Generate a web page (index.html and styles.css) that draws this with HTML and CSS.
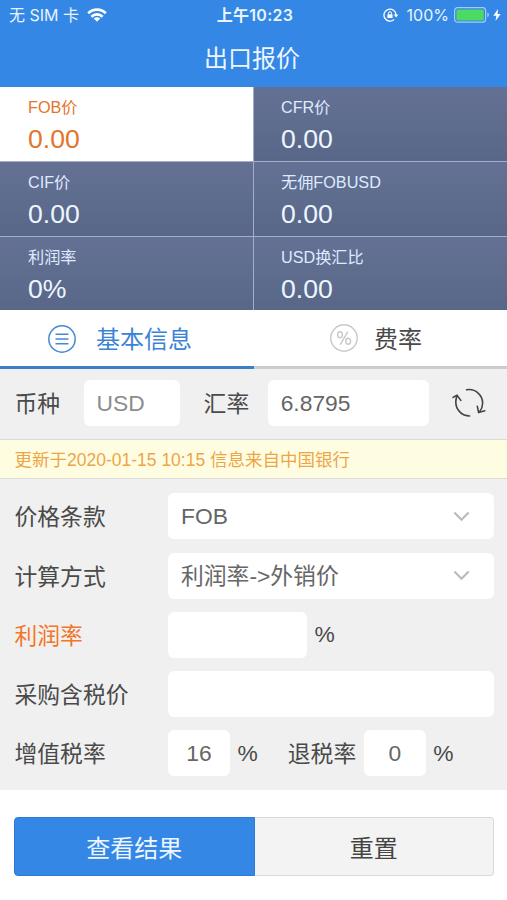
FILE: index.html
```
<!DOCTYPE html>
<html lang="zh-CN">
<head>
  <meta charset="UTF-8" />
  <meta name="viewport" content="width=device-width, initial-scale=1.0" />
  <title>出口报价</title>
  <link rel="stylesheet" href="styles.css">
</head>
<body>
  <!-- Status bar + title -->
  <header class="header">
    <div class="status-bar">
      <div class="status-left">
        <span>无 SIM 卡</span>
        <svg class="wifi" width="20" height="14" viewBox="0 0 20 14" fill="none" stroke="#fff" stroke-width="2.7">
          <path d="M1.2 5.2a12.4 12.4 0 0 1 17.6 0" />
          <path d="M4.4 8.7a7.9 7.9 0 0 1 11.2 0" />
          <path d="M10 13.8 6.7 10.6a4.7 4.7 0 0 1 6.6 0z" fill="#fff" stroke="none" />
        </svg>
      </div>
      <div class="status-time">上午10:23</div>
      <div class="status-right">
        <svg class="lock" width="16" height="14" viewBox="0 0 16 14" fill="none" stroke="#fff">
          <path d="M11.2 11.4A6 6 0 1 1 13 7" stroke-width="1.3" />
          <path d="M10.8 6.4h4.6L13.1 9.4z" fill="#fff" stroke="none" />
          <rect x="4.4" y="6.2" width="5.2" height="3.9" rx=".5" fill="#fff" stroke="none" />
          <path d="M5.5 6.4V5.2a1.5 1.5 0 0 1 3 0v1.2" />
        </svg>
        <span class="percent">100%</span>
        <svg class="battery" width="36" height="16" viewBox="0 0 36 16">
          <rect x=".6" y=".6" width="31" height="14.6" rx="3" fill="none" stroke="#a5cbf5" stroke-width="1.2" />
          <rect x="2.4" y="2.4" width="27.4" height="11" rx="1.4" fill="#4cd964" />
          <path d="M33.3 5.6c2.2.6 2.2 4 0 4.6z" fill="#a5cbf5" />
        </svg>
        <svg class="bolt" width="8" height="12" viewBox="0 0 8 12">
          <path d="M5 0 .3 6.8h3L2.5 12 7.7 4.9H4.6z" fill="#fff" />
        </svg>
      </div>
    </div>
    <h1 class="title">出口报价</h1>
  </header>

  <!-- Prices -->
  <section class="price-grid">
    <div class="price active"><span>FOB价</span><strong>0.00</strong></div>
    <div class="price"><span>CFR价</span><strong>0.00</strong></div>
    <div class="price"><span>CIF价</span><strong>0.00</strong></div>
    <div class="price"><span>无佣FOBUSD</span><strong>0.00</strong></div>
    <div class="price"><span>利润率</span><strong>0%</strong></div>
    <div class="price"><span>USD换汇比</span><strong>0.00</strong></div>
  </section>

  <!-- Tabs -->
  <nav class="tabs">
    <a class="tab active">
      <svg width="28" height="28" viewBox="0 0 28 28" fill="none" stroke="#4389d6" stroke-width="1.5">
        <circle cx="14" cy="14" r="13.2" />
        <path d="M7.5 9.2h13M7.5 14h13M7.5 18.8h13" />
      </svg>
      <span>基本信息</span>
    </a>
    <a class="tab">
      <svg width="28" height="28" viewBox="0 0 28 28" fill="none" stroke="#c8c8c8" stroke-width="1.4">
        <circle cx="14" cy="14" r="13.2" />
        <ellipse cx="10" cy="10.7" rx="2.4" ry="3" />
        <ellipse cx="18.2" cy="17.3" rx="2.4" ry="3" />
        <path d="M17.8 7.6 10.2 20.6" />
      </svg>
      <span>费率</span>
    </a>
  </nav>

  <!-- Currency and rate -->
  <div class="currency">
    <label>币种</label>
    <div class="field field-usd">USD</div>
    <label class="rate-label">汇率</label>
    <div class="field field-rate">6.8795</div>
    <svg class="refresh" width="34" height="30" viewBox="0 0 34 30" fill="none" stroke="#444" stroke-width="1.6" stroke-linecap="round" stroke-linejoin="round">
      <path d="M14.6 1.8C23.5.2 31 7.5 30.6 15.5a13 13 0 0 1-3 8.2" />
      <path d="M25.3 18.2 26.6 24.6 32.8 22.8" />
      <path d="M17.6 28C10 28 3.6 21.8 3.8 13.8a13 13 0 0 1 1-5.2" />
      <path d="M1 9.4 5 7.2 8.8 12.4" />
    </svg>
  </div>
  <p class="notice">更新于2020-01-15 10:15 信息来自中国银行</p>

  <!-- Form -->
  <main class="form">
    <div class="row">
      <label>价格条款</label>
      <div class="field select">FOB
        <svg width="17" height="11" viewBox="0 0 17 11" fill="none" stroke="#bbb" stroke-width="2.2"><path d="M1.4 1.6 8.5 8.8 15.6 1.6" /></svg>
      </div>
    </div>
    <div class="row">
      <label>计算方式</label>
      <div class="field select">利润率-&gt;外销价
        <svg width="17" height="11" viewBox="0 0 17 11" fill="none" stroke="#bbb" stroke-width="2.2"><path d="M1.4 1.6 8.5 8.8 15.6 1.6" /></svg>
      </div>
    </div>
    <div class="row">
      <label class="orange">利润率</label>
      <div class="field medium"></div>
      <span class="unit">%</span>
    </div>
    <div class="row">
      <label>采购含税价</label>
      <div class="field wide"></div>
    </div>
    <div class="row">
      <label>增值税率</label>
      <div class="field small">16</div>
      <span class="unit">%</span>
      <label class="refund">退税率</label>
      <div class="field small">0</div>
      <span class="unit">%</span>
    </div>
  </main>

  <footer class="actions">
    <button class="btn primary">查看结果</button>
    <button class="btn">重置</button>
  </footer>
</body>
</html>
```
FILE: styles.css
```
*, *::before, *::after {
  box-sizing: border-box;
  margin: 0;
  padding: 0;
}

body {
  width: 507px;
  height: 900px;
  overflow: hidden;
  background: #fff;
  color: #4a4a4a;
  font-family: "Liberation Sans", "Noto Sans CJK SC", sans-serif;
  font-size: 22.8px;
}

svg {
  display: block;
  flex: none;
}

/* Header */
.header {
  height: 87px;
  background: #3487e4;
  color: #edf6ff;
}
.status-bar {
  display: grid;
  grid-template-columns: 1fr auto 1fr;
  align-items: center;
  height: 30px;
  padding: 0 6px 0 9px;
  font-family: Inter, "Noto Sans CJK SC", sans-serif;
  font-size: 16px;
  line-height: 30px;
  color: #e8f4ff;
}
.status-left,
.status-right {
  display: flex;
  align-items: center;
}
.wifi {
  margin: -1px 0 0 8px;
}
.status-time {
  font-weight: 600;
  letter-spacing: .3px;
}
.status-right {
  justify-content: flex-end;
}
.lock,
.battery,
.bolt {
  margin-top: -1px;
}
.percent {
  margin: 0 5px 0 8px;
}
.bolt {
  margin-left: 3px;
}
.title {
  padding-right: 3px;
  font-size: 24px;
  font-weight: normal;
  line-height: 57px;
  text-align: center;
}

/* Price cells */
.price-grid {
  display: grid;
  grid-template-columns: 254px 253px;
  grid-template-rows: 75px 75px 73px;
}
.price {
  display: flex;
  flex-direction: column;
  padding: 8px 0 0 27px;
  background: linear-gradient(#647194, #586788);
  border-bottom: 1px solid #a4adca;
  color: #dfeaff;
}
.price:nth-child(odd) {
  border-right: 1px solid #a4adca;
  padding-left: 28px;
}
.price:nth-child(n+5) {
  border-bottom: 0;
}
.price span {
  font-size: 16.2px;
  line-height: 24px;
}
.price strong {
  font-size: 26.6px;
  font-weight: normal;
  line-height: 40px;
  color: #edf6ff;
}
.price.active {
  background: #fff;
}
.price.active span,
.price.active strong {
  color: #e4742b;
}

/* Tabs */
.tabs {
  display: flex;
  height: 59px;
}
.tab {
  display: flex;
  width: 253px;
  padding-left: 76px;
  border-bottom: 3px solid #ccc;
  font-size: 24px;
  line-height: 60px;
}
.tab svg {
  margin: 14px 16px 0 0;
}
.tab.active {
  width: 254px;
  padding-left: 48px;
  border-color: #3b7fc8;
  color: #3b83d6;
}
.tab.active svg {
  margin: 15px 20px 0 0;
}

/* Fields */
label {
  padding-bottom: 1px;
}
.field {
  height: 46px;
  padding-left: 13px;
  border-radius: 6px;
  background: #fff;
  color: #666;
  line-height: 46px;
}
.currency {
  display: flex;
  align-items: center;
  height: 70px;
  padding: 0 20px 2px 14.5px;
  background: #f0f0f0;
}
.currency label {
  padding-bottom: 2px;
}
.field-usd {
  width: 96px;
  margin-left: 23.5px;
  color: #8c8c8c;
}
.rate-label {
  margin-left: 24px;
}
.field-rate {
  width: 161px;
  margin-left: 18.5px;
}
.refresh {
  margin-left: 23px;
}
.notice {
  height: 40px;
  padding-left: 14.5px;
  border-top: 1px solid #dcdcd4;
  border-bottom: 1px solid #dcdcd4;
  background: #fffde1;
  color: #eda547;
  font-size: 17.5px;
  line-height: 41px;
}

.form {
  display: flex;
  flex-direction: column;
  gap: 13.3px;
  height: 311px;
  padding: 14.3px 13px 0 14.5px;
  background: #f0f0f0;
}
.row {
  display: flex;
  align-items: center;
  height: 46px;
}
.row label {
  width: 153.5px;
}
.row .refund {
  width: 69px;
  margin: 0 7px 0 30px;
}
.row .orange {
  color: #f0762a;
}
.select {
  display: flex;
  flex: 1;
  align-items: center;
  justify-content: space-between;
  padding-right: 24px;
}
.medium {
  width: 139px;
}
.wide {
  flex: 1;
}
.small {
  width: 62px;
  padding: 0;
  text-align: center;
}
.unit {
  margin-left: 7.5px;
}

/* Bottom buttons */
.actions {
  display: flex;
  padding: 27px 13px 0 14px;
}
.btn {
  flex: 1;
  height: 59px;
  border: 1px solid #d9d9d9;
  border-left: 0;
  border-radius: 0 4px 4px 0;
  background: #f3f3f3;
  color: #444;
  font-family: inherit;
  font-size: 24px;
}
.btn.primary {
  border: 1px solid #2b7bd6;
  border-radius: 4px 0 0 4px;
  background: #3487e4;
  color: #edf6ff;
}
```
